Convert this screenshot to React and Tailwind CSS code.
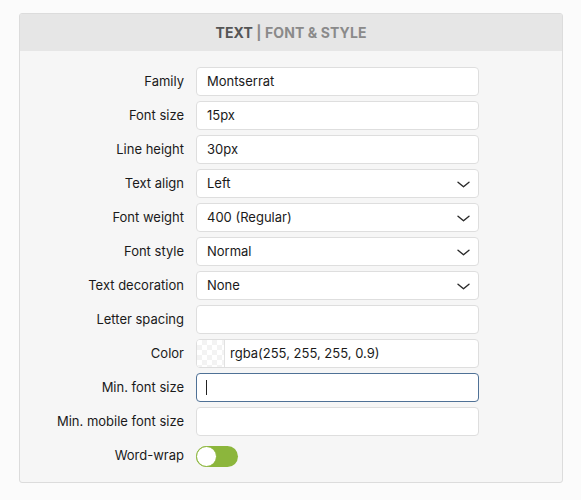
import React from "react";

const font = { fontFamily: "Inter, 'Liberation Sans', sans-serif" };

function Chevron() {
  return (
    <svg width="13" height="7" viewBox="0 0 13 7" className="absolute right-[8px] top-[11px]" fill="none">
      <path d="M1 1.2l5.5 4.6L12 1.2" stroke="#2a2a2a" strokeWidth="1.4" strokeLinecap="round" strokeLinejoin="round" />
    </svg>
  );
}

function Row({ label, children }) {
  return (
    <>
      <div className="flex items-center justify-end h-[29px] text-[13px] text-[#1a1a1a]">{label}</div>
      <div className="flex items-center h-[29px]">{children}</div>
    </>
  );
}

function TextBox({ value, focus }) {
  return (
    <div
      className={
        "w-[283px] h-[29px] rounded-[4px] bg-white flex items-center px-[10px] text-[13px] text-[#1a1a1a] border " +
        (focus ? "border-[#4f7196]" : "border-[#dedede]")
      }
    >
      {value}
      {focus && <span className="w-[1px] h-[15px] bg-[#222] -ml-[1px]" />}
    </div>
  );
}

function Select({ value }) {
  return (
    <div className="relative w-[283px] h-[29px] rounded-[4px] bg-white flex items-center px-[10px] text-[13px] text-[#1a1a1a] border border-[#dedede]">
      {value}
      <Chevron />
    </div>
  );
}

export default function App() {
  return (
    <div className="w-[581px] h-[500px] bg-[#fbfbfb] pt-[13px] pl-[19px]" style={font}>
      <div className="w-[544px] h-[470px] border border-[#dcdcdc] rounded-[3px] bg-[#f6f6f6] overflow-hidden">
        <div className="h-[37px] bg-[#e6e6e6] flex items-center justify-center text-[14px] font-bold tracking-[0.1px]">
          <span className="text-[#555]">TEXT</span>
          <span className="text-[#8a8a8a]">&nbsp;| FONT &amp; STYLE</span>
        </div>
        <div className="grid grid-cols-[164px_283px] gap-x-[12px] gap-y-[5px] pt-[16px]">
          <Row label="Family"><TextBox value="Montserrat" /></Row>
          <Row label="Font size"><TextBox value="15px" /></Row>
          <Row label="Line height"><TextBox value="30px" /></Row>
          <Row label="Text align"><Select value="Left" /></Row>
          <Row label="Font weight"><Select value="400 (Regular)" /></Row>
          <Row label="Font style"><Select value="Normal" /></Row>
          <Row label="Text decoration"><Select value="None" /></Row>
          <Row label="Letter spacing"><TextBox value="" /></Row>
          <Row label="Color">
            <div className="w-[283px] h-[29px] rounded-[4px] bg-white flex items-center text-[13px] text-[#1a1a1a] border border-[#dedede] overflow-hidden">
              <div
                className="w-[28px] h-full border-r border-[#e2e2e2] shrink-0"
                style={{
                  backgroundColor: "#fff",
                  backgroundImage:
                    "linear-gradient(45deg,#f3f3f3 25%,transparent 25%,transparent 75%,#f3f3f3 75%),linear-gradient(45deg,#f3f3f3 25%,transparent 25%,transparent 75%,#f3f3f3 75%)",
                  backgroundSize: "10px 10px",
                  backgroundPosition: "0 0,5px 5px",
                }}
              />
              <span className="pl-[5px]">rgba(255, 255, 255, 0.9)</span>
            </div>
          </Row>
          <Row label="Min. font size"><TextBox value="" focus /></Row>
          <Row label="Min. mobile font size"><TextBox value="" /></Row>
          <Row label="Word-wrap">
            <div className="w-[42px] h-[21px] rounded-full bg-[#8cb63c] relative mt-[2px]">
              <div className="absolute left-0 top-0 w-[21px] h-[21px] rounded-full bg-white border-[1.5px] border-[#8cb63c]" />
            </div>
          </Row>
        </div>
      </div>
    </div>
  );
}
